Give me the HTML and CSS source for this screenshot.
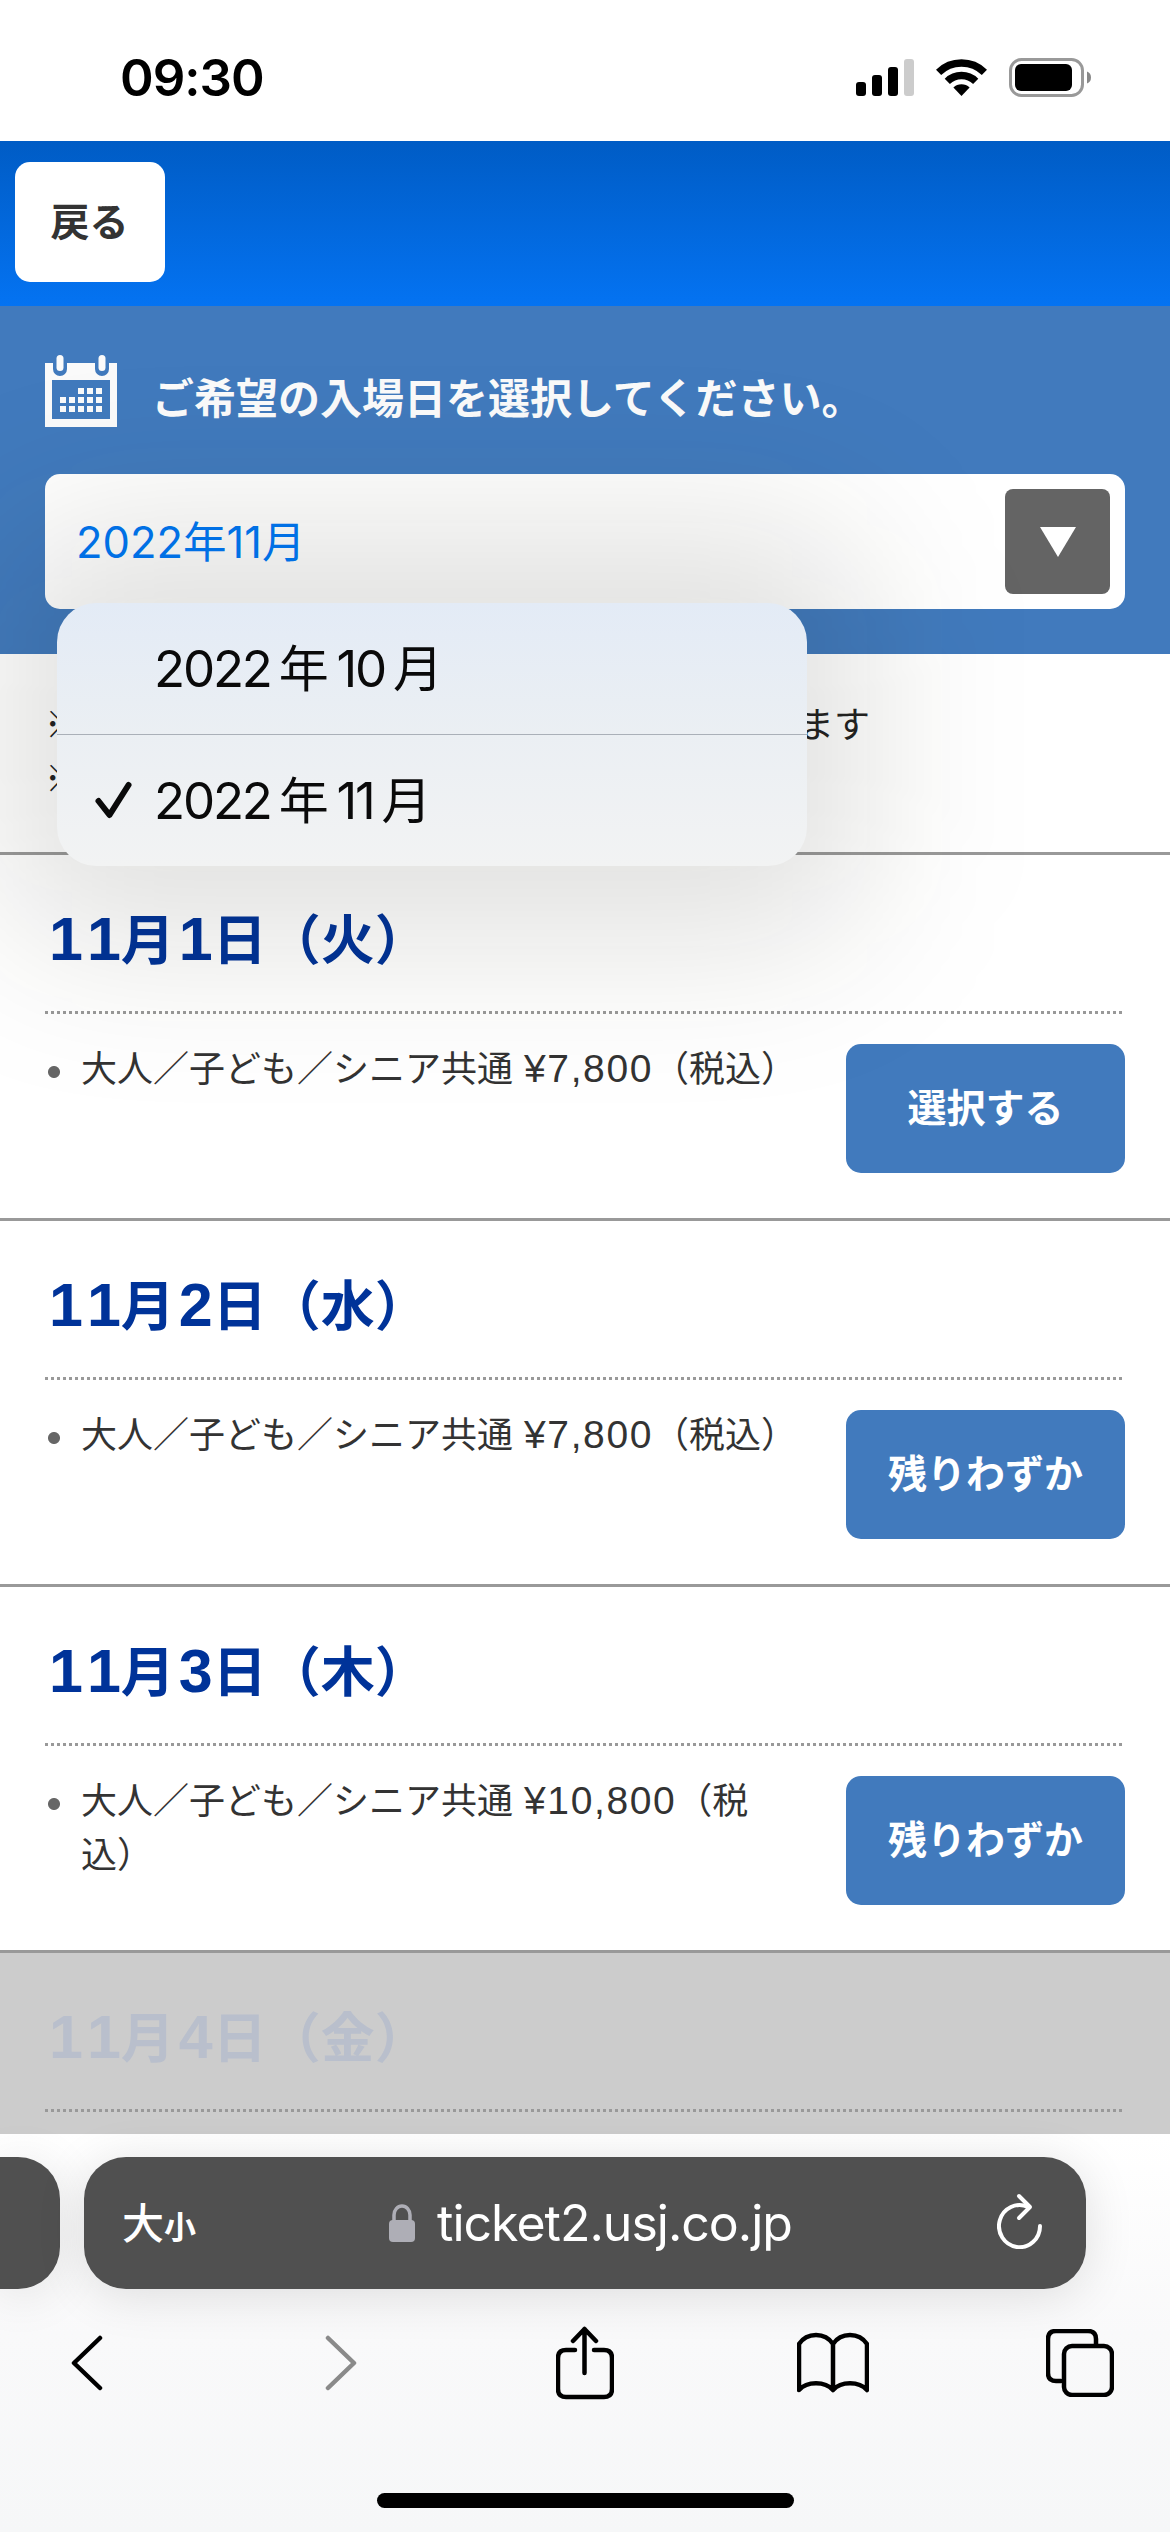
FILE: index.html
```html
<!DOCTYPE html>
<html lang="ja">
  <head>
    <meta charset="utf-8">
    <meta name="viewport" content="width=device-width, initial-scale=1.0">
    <title>入場日の選択</title>
    <link rel="stylesheet" href="styles.css">
  </head>
  <body>
    <div class="status-bar">
      <span class="time">09:30</span>
      <div class="status-icons">
        <svg class="signal" width="58" height="37" viewBox="0 0 58 37">
          <rect x="0" y="23" width="10" height="14" rx="3"/>
          <rect x="16" y="16" width="10" height="21" rx="3"/>
          <rect x="32" y="8" width="10" height="29" rx="3"/>
          <rect x="48" y="0" width="10" height="37" rx="3" fill="#ccc"/>
        </svg>
        <svg class="wifi" width="51" height="37" viewBox="0 0 51 37">
          <g fill="none" stroke="#000" stroke-width="7.4">
            <path d="M2.6 13.3A32.8 32.8 0 0 1 48.4 13.3"/>
            <path d="M11.3 22.3A20.3 20.3 0 0 1 39.7 22.3"/>
          </g>
          <path d="M25.5 37L17.4 28.6A11.6 11.6 0 0 1 33.6 28.6Z"/>
        </svg>
        <svg class="battery" width="82" height="39" viewBox="0 0 82 39">
          <rect x="1.5" y="1.5" width="72" height="36" rx="11" fill="none" stroke="#999" stroke-width="3"/>
          <rect x="6" y="6" width="57" height="27" rx="6"/>
          <path d="M78 13.5Q82 15 82 19.5T78 25.5Z" fill="#888"/>
        </svg>
      </div>
    </div>

    <header class="header">
      <button class="back">戻る</button>
    </header>

    <section class="search">
      <h1>
        <svg width="72" height="72" viewBox="0 0 72 72" fill="#fafafa">
          <path fill-rule="evenodd" d="M0 8H8V14a7 7 0 0 0 14 0V8H50V14a7 7 0 0 0 14 0V8H72V72H0ZM7 25V64H65V25Z"/>
          <rect x="11.500" y="0" width="7" height="16" rx="3.500"/>
          <rect x="53.500" y="0" width="7" height="16" rx="3.500"/>
          <path d="M33 33h6v6h-6zM42 33h6v6h-6zM51 33h6v6h-6zM15 42h6v6h-6zM24 42h6v6h-6zM33 42h6v6h-6zM42 42h6v6h-6zM51 42h6v6h-6zM15 51h6v6h-6zM24 51h6v6h-6zM33 51h6v6h-6zM42 51h6v6h-6zM51 51h6v6h-6z"/>
        </svg>
        <span>ご希望の入場日を選択してください。</span>
      </h1>
      <div class="select">
        <span class="select-value">2022年11月</span>
        <span class="select-arrow">
          <svg width="36" height="30" viewBox="0 0 36 30"><path d="M0 0H36L18 30Z" fill="#fff"/></svg>
        </span>
        <div class="menu-shadow"></div>
        <div class="menu">
          <div class="menu-item"><span>2022<i>年</i>10<i>月</i></span></div>
          <div class="menu-item">
            <svg class="check" width="38" height="38" viewBox="0 0 38 38"><path d="M3.500 20L14.500 34L33.500 4" fill="none" stroke="#0a0a0a" stroke-width="6" stroke-linecap="round" stroke-linejoin="round"/></svg>
            <span>2022<i>年</i>11<i>月</i></span>
          </div>
        </div>
      </div>
    </section>

    <div class="notes">
      <p><span>※</span><span>ます</span></p>
      <p><span>※</span></p>
    </div>

    <ul class="days">
      <li class="day">
        <h2><b>11</b>月<b>1</b>日（火）</h2>
        <div class="day-body">
          <p>大人／子ども／シニア共通 <span class="num">¥7,800</span>（税込）</p>
          <button>選択する</button>
        </div>
      </li>
      <li class="day">
        <h2><b>11</b>月<b>2</b>日（水）</h2>
        <div class="day-body">
          <p>大人／子ども／シニア共通 <span class="num">¥7,800</span>（税込）</p>
          <button>残りわずか</button>
        </div>
      </li>
      <li class="day">
        <h2><b>11</b>月<b>3</b>日（木）</h2>
        <div class="day-body">
          <p>大人／子ども／シニア共通 <span class="num">¥10,800</span>（税<br>込）</p>
          <button>残りわずか</button>
        </div>
      </li>
      <li class="day closed">
        <h2><b>11</b>月<b>4</b>日（金）</h2>
      </li>
    </ul>

    <footer class="browser">
      <div class="tabs">
        <div class="tab-prev"></div>
        <div class="address">
          <span class="text-size">大<small>小</small></span>
          <span class="url">
            <svg width="26" height="38" viewBox="0 0 26 38"><rect y="16" width="26" height="22" rx="4" fill="#aeaeb6"/><path d="M5 18V11a8 9 0 0 1 16 0V18" fill="none" stroke="#aeaeb6" stroke-width="3.500"/></svg>
            <span>ticket2.usj.co.jp</span>
          </span>
          <svg class="reload" width="46" height="56" viewBox="0 0 46 56" fill="none" stroke="#fff" stroke-width="4" stroke-linecap="round" stroke-linejoin="round"><path d="M43 33A20.500 21 0 1 1 31 14"/><path d="M22 3L33 14L22 25"/></svg>
        </div>
      </div>
      <div class="toolbar">
        <svg class="prev" width="32" height="56" viewBox="0 0 32 56"><path d="M29 3L3 28L29 53"/></svg>
        <svg class="next" width="32" height="56" viewBox="0 0 32 56"><path d="M3 3L29 28L3 53"/></svg>
        <svg width="58" height="74" viewBox="0 0 58 74"><path d="M19 24H10Q2 24 2 32V63Q2 71 10 71H48Q56 71 56 63V32Q56 24 48 24H38M28.500 47V3M17 15L28.500 3L40 15"/></svg>
        <svg width="72" height="62" viewBox="0 0 72 62"><path d="M36 12C28 0 10 0 2 12V58C10 49 28 49 36 58C44 49 62 49 70 58V12C62 0 44 0 36 12V58"/></svg>
        <svg class="pages" width="68" height="68" viewBox="0 0 68 68"><path d="M15 52H10Q2 52 2 44V10Q2 2 10 2H42Q50 2 50 10V16"/><rect x="18" y="17" width="48" height="49" rx="8"/></svg>
      </div>
      <div class="home"></div>
    </footer>
  </body>
</html>
```

FILE: styles.css
```css
* {
  box-sizing: border-box;
}

body {
  display: flex;
  flex-direction: column;
  width: 1170px;
  height: 2532px;
  margin: 0;
  overflow: hidden;
  background-color: #fff;
  color: #333;
  font-family: "Noto Sans CJK JP", sans-serif;
  font-size: 36px;
}

h1, h2, p, ul {
  margin: 0;
  padding: 0;
}

svg {
  display: block;
  flex: none;
}

button {
  border: none;
  padding: 0 0 8px;
  border-radius: 15px;
  font-family: inherit;
  font-weight: 600;
}

/* Status bar */
.status-bar {
  display: flex;
  justify-content: space-between;
  height: 141px;
  padding: 58px 79px 0 120px;
}

.time {
  color: #000;
  font: 600 51px/39px Inter, sans-serif;
  letter-spacing: -1px;
}

.status-icons {
  display: flex;
  gap: 22px;
}

.signal, .wifi {
  margin-top: 1px;
}

/* Header */
.header {
  position: relative;
  z-index: 3;
  height: 165px;
  padding: 21px 15px;
  background: linear-gradient(#005cc5, #0473f2);
}

.back {
  display: block;
  width: 150px;
  height: 120px;
  padding: 0 1px 6px 0;
  background-color: #fff;
  color: #333;
  font-size: 39px;
}

/* Month select */
.search {
  height: 348px;
  padding: 49px 45px 0;
  background-color: #417abd;
}

h1 {
  display: flex;
  gap: 35px;
  color: #fafafa;
  font-size: 42px;
  font-weight: 600;
  line-height: 82px;
}

h1 svg {
  margin-bottom: 12px;
}

.select {
  position: relative;
  display: flex;
  align-items: center;
  justify-content: space-between;
  height: 135px;
  margin-top: 35px;
  padding: 0 15px 0 31px;
  border-radius: 15px;
  background-color: #fff;
}

.select-value {
  position: relative;
  z-index: 2;
  padding-bottom: 5px;
  color: #0070e5;
  font-family: Inter, "Noto Sans CJK JP", sans-serif;
  font-size: 43.5px;
}

.select-arrow {
  display: flex;
  align-items: center;
  justify-content: center;
  width: 105px;
  height: 105px;
  border-radius: 8px;
  background-color: #646464;
}

.menu {
  position: absolute;
  z-index: 2;
  left: 12px;
  top: 129px;
  width: 750px;
  height: 263px;
  border-radius: 39px;
  background: linear-gradient(#e3ebf6, #ebeff3 50%, #f2f3f3);
}

.menu-shadow {
  position: absolute;
  z-index: 1;
  left: -48px;
  top: 49px;
  width: 870px;
  height: 423px;
  border-radius: 90px;
  background-color: rgba(25, 25, 5, 0.125);
  filter: blur(80px);
}

.menu-item {
  display: flex;
  align-items: center;
  height: 131px;
  padding-left: 97px;
  color: #0a0a0a;
  font-family: Inter, "Noto Sans CJK JP", sans-serif;
  font-size: 51px;
  letter-spacing: -2.2px;
}

.menu-item span {
  padding-bottom: 7px;
}

.menu-item + .menu-item {
  border-top: 1px solid #aab0b8;
  padding-left: 38px;
}

.menu-item i {
  margin: 0 10px 0 8px;
  font-size: 50px;
  font-style: normal;
}

.check {
  margin-right: 21px;
}

/* Notes */
.notes {
  height: 198px;
  padding: 41px 45px 0;
  color: #222;
  line-height: 54px;
}

.notes p {
  display: flex;
  justify-content: space-between;
  width: 825px;
}

/* Day list */
.days {
  height: 1282px;
  overflow: hidden;
  list-style: none;
}

.day {
  height: 366px;
  border-top: 3px solid #999;
  padding: 0 45px;
}

h2 {
  height: 159px;
  color: #039;
  font-size: 54px;
  font-weight: 600;
  line-height: 164px;
  background: repeating-linear-gradient(90deg, #999 0 3px, transparent 3px 6px) bottom / 100% 3px no-repeat;
}

h2 b {
  position: relative;
  left: 4px;
  font: bold 61px/1 "Liberation Sans", sans-serif;
  font-kerning: none;
  letter-spacing: 4px;
}

.day-body {
  display: flex;
  justify-content: space-between;
  padding-top: 30px;
}

.day-body p {
  display: flow-root;
  margin-top: -5px;
  padding-left: 36px;
  line-height: 54px;
  white-space: nowrap;
  background: radial-gradient(circle at 9px 33px, #666 5.500px, transparent 6.500px);
}

.num {
  margin-left: 3px;
  font: 39px/1 "Liberation Sans", sans-serif;
  font-kerning: none;
  letter-spacing: 1.6px;
}

.day-body button {
  width: 279px;
  height: 129px;
  background-color: #417abd;
  color: #fff;
  font-size: 39px;
}

.closed {
  background-color: #ccc;
}

.closed h2 {
  color: #b9bfcc;
}

/* Browser bars */
.browser {
  position: relative;
  z-index: 3;
  height: 398px;
  background: linear-gradient(#fff, #f9f9fa 50%, #f6f7f8);
}

.tabs {
  display: flex;
  gap: 24px;
  padding-top: 23px;
}

.tab-prev {
  width: 60px;
  height: 132px;
  border-radius: 0 42px 42px 0;
  background-color: #505050;
  box-shadow: 0 6px 50px rgba(0, 0, 0, 0.1);
}

.address {
  display: flex;
  align-items: center;
  justify-content: space-between;
  width: 1002px;
  height: 132px;
  padding: 0 43px 0 38px;
  border-radius: 42px;
  background-color: #505050;
  box-shadow: 0 6px 50px rgba(0, 0, 0, 0.12);
  color: #fff;
}

.text-size {
  font-size: 42px;
  font-weight: 500;
  line-height: 60px;
}

.text-size small {
  font-size: 32px;
  font-weight: 700;
}

.url {
  display: flex;
  align-items: center;
  gap: 22px;
  margin-right: 12px;
  font: 50px/60px Inter, sans-serif;
  letter-spacing: -1px;
}

.reload {
  margin-top: -4px;
}

.toolbar {
  display: grid;
  grid-template-columns: repeat(5, 248px);
  align-items: center;
  justify-content: center;
  justify-items: center;
  height: 74px;
  margin-top: 37px;
}

.toolbar svg {
  fill: none;
  stroke: #000;
  stroke-width: 4.500;
  stroke-linecap: round;
  stroke-linejoin: round;
}

.toolbar .prev {
  margin-right: 5px;
}

.toolbar .next {
  margin-left: 8px;
  stroke: #8a8a8a;
}

.toolbar .pages {
  margin-right: 3px;
}

.home {
  width: 417px;
  height: 15px;
  margin: 93px auto 0;
  border-radius: 8px;
  background-color: #000;
}
```
